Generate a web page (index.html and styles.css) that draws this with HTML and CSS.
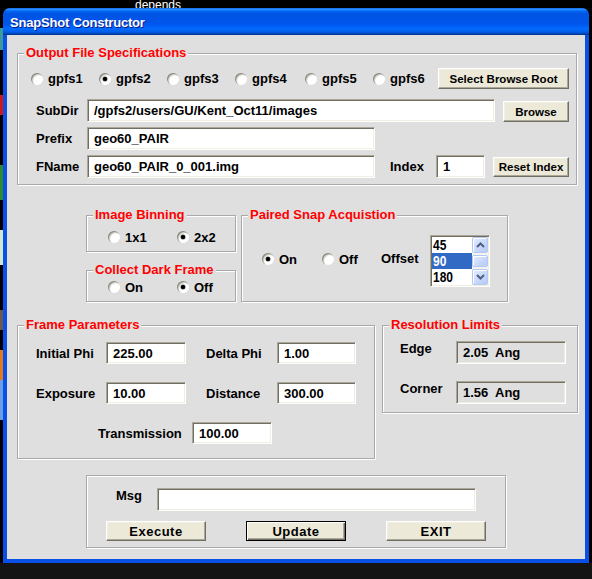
FILE: index.html
```html
<!DOCTYPE html>
<html>
<head>
<meta charset="utf-8">
<title>SnapShot Constructor</title>
<link rel="stylesheet" href="styles.css">
</head>
<body>
<div class="desk-top"><span class="desk-text">depends</span></div>
<div class="desk-mid">
  <div class="desk-icons"></div>
  <div class="window">
    <div class="titlebar">SnapShot Constructor</div>
    <div class="client">

      <div class="group out">
        <div class="legend">Output File Specifications</div>
        <div class="radio-row">
          <div class="ritem"><span class="radio"></span>gpfs1</div>
          <div class="ritem"><span class="radio on"></span>gpfs2</div>
          <div class="ritem"><span class="radio"></span>gpfs3</div>
          <div class="ritem"><span class="radio"></span>gpfs4</div>
          <div class="ritem"><span class="radio"></span>gpfs5</div>
          <div class="ritem"><span class="radio"></span>gpfs6</div>
          <button class="btn b-root">Select Browse Root</button>
        </div>
        <div class="frow r-sub">
          <span class="lbl-out">SubDir</span>
          <div class="field f-sub">/gpfs2/users/GU/Kent_Oct11/images</div>
          <button class="btn b-browse">Browse</button>
        </div>
        <div class="frow">
          <span class="lbl-out">Prefix</span>
          <div class="field f-pre">geo60_PAIR</div>
        </div>
        <div class="frow">
          <span class="lbl-out">FName</span>
          <div class="field f-pre">geo60_PAIR_0_001.img</div>
          <span class="lbl-idx">Index</span>
          <div class="field f-idx">1</div>
          <button class="btn b-reset">Reset Index</button>
        </div>
      </div>

      <div class="mid">
        <div class="mid-left">
          <div class="group ib">
            <div class="legend">Image Binning</div>
            <div class="rrow2">
              <div class="ritem"><span class="radio"></span>1x1</div>
              <div class="ritem"><span class="radio on"></span>2x2</div>
            </div>
          </div>
          <div class="group df">
            <div class="legend">Collect Dark Frame</div>
            <div class="rrow2">
              <div class="ritem"><span class="radio"></span>On</div>
              <div class="ritem"><span class="radio on"></span>Off</div>
            </div>
          </div>
        </div>
        <div class="group paired">
          <div class="legend">Paired Snap Acquistion</div>
          <div class="ritem p-on"><span class="radio on"></span>On</div>
          <div class="ritem p-off"><span class="radio"></span>Off</div>
          <span class="p-offset">Offset</span>
          <div class="listbox">
            <div class="litems">
              <div class="litem"><span class="ltext">45</span></div>
              <div class="litem sel"><span class="ltext">90</span></div>
              <div class="litem"><span class="ltext">180</span></div>
            </div>
            <div class="sb">
              <div class="sb-btn"><svg width="9" height="6" viewBox="0 0 9 6"><polyline points="1,5 4.5,1.5 8,5" fill="none" stroke="#4d6185" stroke-width="2"/></svg></div>
              <div class="sb-thumb"></div>
              <div class="sb-btn"><svg width="9" height="6" viewBox="0 0 9 6"><polyline points="1,1 4.5,4.5 8,1" fill="none" stroke="#4d6185" stroke-width="2"/></svg></div>
            </div>
          </div>
        </div>
      </div>

      <div class="frame-row">
        <div class="group fp">
          <div class="legend">Frame Parameters</div>
          <div class="fp-row">
            <span class="fp-l1">Initial Phi</span>
            <div class="field fp-in1">225.00</div>
            <span class="fp-l2">Delta Phi</span>
            <div class="field fp-in2">1.00</div>
          </div>
          <div class="fp-row">
            <span class="fp-l1">Exposure</span>
            <div class="field fp-in1">10.00</div>
            <span class="fp-l2">Distance</span>
            <div class="field fp-in2">300.00</div>
          </div>
          <div class="fp-row fp-row3">
            <span class="fp-l3">Transmission</span>
            <div class="field fp-in1">100.00</div>
          </div>
        </div>
        <div class="group res">
          <div class="legend">Resolution Limits</div>
          <div class="res-row">
            <span class="res-lbl">Edge</span>
            <div class="field rfield">2.05  Ang</div>
          </div>
          <div class="res-row">
            <span class="res-lbl">Corner</span>
            <div class="field rfield">1.56  Ang</div>
          </div>
        </div>
      </div>

      <div class="group bottom">
        <div class="msg-row">
          <span class="msg-lbl">Msg</span>
          <div class="field f-msg"></div>
        </div>
        <div class="btn-row">
          <button class="btn bbtn">Execute</button>
          <button class="btn bbtn default">Update</button>
          <button class="btn bbtn">EXIT</button>
        </div>
      </div>

    </div>
  </div>
</div>
<div class="desk-bottom"></div>
</body>
</html>
```

FILE: styles.css
```css
* { box-sizing: border-box; }
html, body { margin: 0; padding: 0; }
body {
  width: 592px;
  height: 579px;
  overflow: hidden;
  background: #000;
  font-family: "Liberation Sans", Arial, sans-serif;
  font-weight: bold;
  font-size: 13px;
  color: #000;
}

/* desktop behind the window */
.desk-top { height: 8px; overflow: hidden; padding-left: 135px; }
.desk-text {
  display: block;
  color: #fff;
  font-weight: normal;
  font-size: 12px;
  line-height: 12px;
  margin-top: -1px;
}
.desk-mid { display: flex; height: 555px; }
.desk-icons {
  width: 3px;
  flex: none;
  background: linear-gradient(to bottom,
    #000 0 20px, #3a9a9a 20px 42px, #000 42px 87px,
    #d01818 87px 107px, #000 107px 157px, #2e8a2e 157px 192px,
    #000 192px 222px, #cfe8cf 222px 257px, #000 257px 302px,
    #6b5a48 302px 322px, #000 322px 342px, #e07a20 342px 372px,
    #6aa0e0 372px 412px, #000 412px);
}
.desk-bottom { height: 16px; background: #141414; }

/* window frame */
.window {
  width: 586px;
  flex: none;
  display: flex;
  flex-direction: column;
  background: #0a4fe6;
  border-radius: 8px 8px 0 0;
}
.titlebar {
  height: 27px;
  flex: none;
  border-radius: 7px 7px 0 0;
  background: linear-gradient(to bottom,
    #0058ee 0%, #3593ff 4%, #288eff 6%, #127dff 8%, #036ffc 10%,
    #0262ee 14%, #0057e5 20%, #0054e3 24%, #0055eb 56%, #005bf5 66%,
    #026afe 76%, #0062ef 86%, #0052d6 92%, #0040ab 96%, #003092 100%);
  color: #fff;
  font-size: 13px;
  letter-spacing: -0.2px;
  padding: 2px 0 0 7px;
  display: flex;
  align-items: center;
  text-shadow: 1px 1px 0 #0a1a8a;
}
.client {
  flex: 1;
  margin: 0 4px 4px;
  background: #dfdfdf;
  display: flex;
  flex-direction: column;
  align-items: flex-start;
}

/* group boxes */
.group {
  position: relative;
  border: 1px solid #a9a9a9;
  box-shadow: 1px 1px 0 #fff, inset 1px 1px 0 #fff;
}
.legend {
  position: absolute;
  top: -9px;
  left: 6px;
  padding: 0 2px;
  background: #dfdfdf;
  color: #ff0000;
  font-size: 13px;
  line-height: 15px;
  white-space: nowrap;
}

/* controls */
.field {
  background: #fff;
  border: 1px solid;
  border-color: #aca899 #fff #fff #aca899;
  box-shadow: inset 1px 1px 0 #716f64, inset -1px -1px 0 #f1efe2;
  padding: 0 4px 0 6px;
  display: flex;
  align-items: center;
  white-space: pre;
  overflow: hidden;
  flex: none;
}
.btn {
  font: inherit;
  font-size: 11.5px;
  color: #000;
  background: #ece9d8;
  border: 1px solid;
  border-color: #fff #716f64 #716f64 #fff;
  box-shadow: inset -1px -1px 0 #aca899, inset 1px 1px 0 #f1efe2;
  padding: 0;
  margin: 0;
  display: flex;
  align-items: center;
  justify-content: center;
  flex: none;
  white-space: nowrap;
}
.btn.default {
  border-color: #000;
  box-shadow: inset 1px 1px 0 #fff, inset -1px -1px 0 #716f64, inset -2px -2px 0 #aca899;
}
.ritem { display: flex; align-items: center; gap: 5px; height: 16px; white-space: nowrap; }
.radio {
  position: relative;
  width: 12px;
  height: 12px;
  flex: none;
  border-radius: 50%;
  background: #fff;
  box-shadow: inset 1px 1px 0 #8d8b80, inset 2px 2px 1px #cfcdc4;
}
.radio.on::after {
  content: "";
  position: absolute;
  left: 4px;
  top: 4px;
  width: 4px;
  height: 4px;
  border-radius: 50%;
  background: #000;
  box-shadow: 0 0 0 0.5px #555;
}

/* output file specifications */
.out {
  margin: 18px 0 0 10px;
  width: 560px;
  height: 132px;
  padding-top: 14px;
  display: flex;
  flex-direction: column;
}
.radio-row {
  display: grid;
  grid-template-columns: 68px 68px 68px 70px 68px 65px 131px;
  align-items: center;
  height: 21px;
  padding-left: 13px;
}
.b-root { height: 21px; width: 131px; }
.frow { display: flex; align-items: center; padding-left: 18px; margin-top: 5px; }
.r-sub { margin-top: 10px; }
.lbl-out { width: 51px; flex: none; }
.f-sub { width: 408px; height: 23px; }
.b-browse { width: 66px; height: 21px; margin-left: 8px; align-self: flex-end; }
.f-pre { width: 288px; height: 23px; }
.lbl-idx { width: 36px; margin-left: 15px; margin-right: 10px; flex: none; }
.f-idx { width: 49px; height: 23px; }
.b-reset { width: 76px; height: 20px; margin-left: 8px; }

/* middle */
.mid { display: flex; gap: 5px; margin: 30px 0 0 79px; align-items: flex-start; }
.mid-left { width: 150px; display: flex; flex-direction: column; gap: 18px; }
.ib { height: 37px; padding: 13px 0 0 21px; }
.df { height: 32px; padding: 8px 0 0 21px; }
.rrow2 { display: grid; grid-template-columns: 69px 69px; }
.paired {
  width: 267px;
  height: 87px;
  padding: 19px 0 0 20px;
  display: flex;
  align-items: flex-start;
}
.p-on { width: 60px; margin-top: 16px; }
.p-off { width: 59px; margin-top: 16px; }
.p-offset { width: 49px; margin-top: 16px; line-height: 16px; flex: none; }
.listbox {
  width: 60px;
  height: 52px;
  flex: none;
  display: flex;
  background: #fff;
  border: 1px solid;
  border-color: #aca899 #fff #fff #aca899;
  box-shadow: inset 1px 1px 0 #716f64, inset -1px -1px 0 #f1efe2;
  padding: 1px;
}
.litems { width: 40px; display: flex; flex-direction: column; }
.litem {
  height: 16px;
  line-height: 16px;
  padding-left: 1px;
  font-size: 15px;
  overflow: hidden;
}
.ltext { display: inline-block; transform: scaleX(0.8); transform-origin: left center; }
.litem.sel { background: #316ac5; color: #fff; }
.sb {
  width: 16px;
  display: flex;
  flex-direction: column;
  background: #f4f3ee;
}
.sb-btn, .sb-thumb {
  border: 1px solid #b4c8f6;
  border-radius: 2px;
  background: linear-gradient(135deg, #e8effd 0%, #c6d6fb 60%, #b6cbf6 100%);
  box-shadow: inset 1px 1px 0 #fff;
}
.sb-btn { height: 16px; display: flex; align-items: center; justify-content: center; }
.sb-thumb { height: 12px; margin: 2px 0; }

/* frame parameters */
.frame-row { display: flex; gap: 7px; margin: 23px 0 0 10px; align-items: flex-start; }
.fp { width: 358px; height: 134px; padding: 16px 0 0 18px; }
.fp-row { display: flex; align-items: center; height: 22px; margin-bottom: 18px; }
.fp-l1 { width: 70px; flex: none; }
.fp-l2 { width: 71px; margin-left: 20px; flex: none; }
.fp-in1 { width: 80px; height: 22px; }
.fp-in2 { width: 79px; height: 22px; }
.fp-row3 { padding-left: 62px; }
.fp-l3 { width: 94px; flex: none; }

.res { width: 196px; height: 88px; padding: 15px 0 0 17px; }
.res-row { display: flex; align-items: flex-start; height: 23px; margin-bottom: 17px; }
.res-lbl { width: 56px; line-height: 15px; flex: none; }
.rfield { width: 110px; height: 23px; background: #dfdfdf; }

/* bottom */
.bottom { width: 420px; height: 73px; margin: 16px 0 0 79px; padding-top: 12px; }
.msg-row { display: flex; align-items: flex-start; padding-left: 29px; height: 23px; }
.msg-lbl { width: 41px; line-height: 15px; flex: none; }
.f-msg { width: 319px; height: 23px; }
.btn-row { display: flex; gap: 40px; padding-left: 19px; margin-top: 10px; }
.bbtn { width: 100px; height: 20px; font-size: 13px; letter-spacing: 0.5px; }
```
